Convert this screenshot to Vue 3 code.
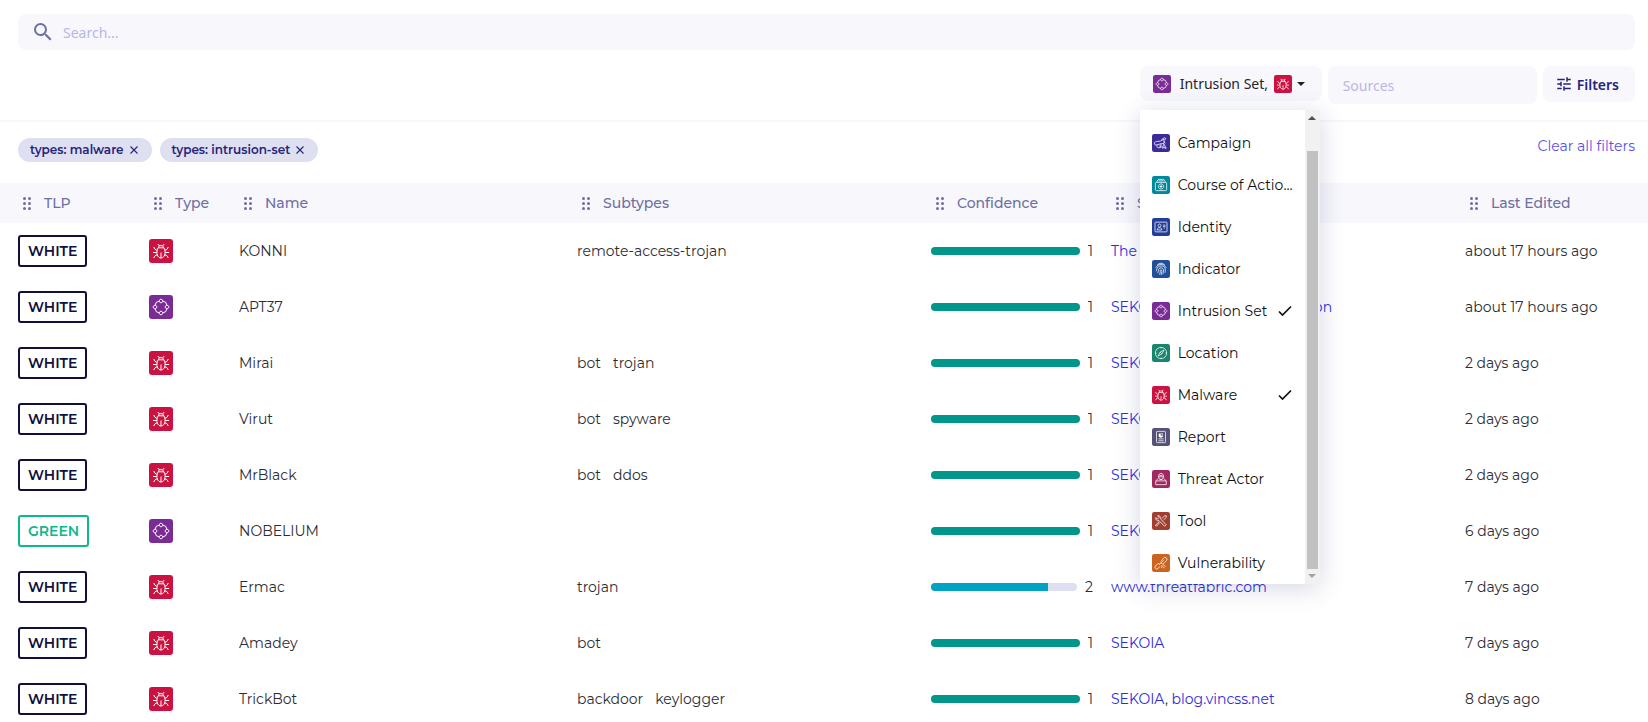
<script setup>
import { ref, computed, h } from 'vue'

const query = ref('')
const source = ref('')

const kinds = {
  campaign: {
    label: 'Campaign',
    color: '#3c2a99',
    path: 'M4.500 10.500a2 2 0 0 0 1.500 4L12 13l4-.500V7l-5 2.500-5 .500ZM12.500 7.500l4-2.500 2 1-1.500 2M16 9.500l1.500 3M7 14.500a2.500 2.500 0 1 0 4.500 1.500h-2M12 13v5h-1M13.500 18.500l2.500-5 3 5.500h-2l-1-2-1 2Z'
  },
  course: {
    label: 'Course of Action',
    color: '#00899b',
    path: 'M6 8.500h12a1.500 1.500 0 0 1 1.500 1.500v8a1.500 1.500 0 0 1-1.500 1.500H6A1.500 1.500 0 0 1 4.500 18v-8A1.500 1.500 0 0 1 6 8.500ZM6.500 8.500V7l2-2.500h7l2 2.500v1.500M8.500 6.500h7M12 10.500a3.500 3.500 0 1 0 .01 0',
    solid: 'M11.300 12.200h1.400v1.100h1.100v1.400h-1.100v1.100h-1.400v-1.100h-1.100v-1.400h1.100Z'
  },
  identity: {
    label: 'Identity',
    color: '#213c99',
    path: 'M5 5.500h14a1 1 0 0 1 1 1v11a1 1 0 0 1-1 1H5a1 1 0 0 1-1-1v-11a1 1 0 0 1 1-1ZM10 8a2 2 0 1 0 .01 0M7 16v-1.500l2-1.500h2l2 1.500V16ZM14.500 9.500h3.500M14.500 11.500h3.500M15.500 13.500H17'
  },
  indicator: {
    label: 'Indicator',
    color: '#1f4f99',
    path: 'M7 6.500a7.500 7.500 0 0 1 10 0M5 10.500a7.500 7.500 0 0 1 14 0M5.500 15c1-1.500.500-7 6.500-7s6 4 5.500 9M7.500 17.500c2-3 0-7 4.500-7s3.500 5 2.500 8.500M10 19.500c2-3 0-6.500 2-6.500s1 4 .200 7'
  },
  intrusion: {
    label: 'Intrusion Set',
    color: '#7a2b96',
    path: 'M12 4.200a1.800 1.800 0 1 0 .01 0M12 16.200a1.800 1.800 0 1 0 .01 0M6 10.200a1.800 1.800 0 1 0 .01 0M18 10.200a1.800 1.800 0 1 0 .01 0M10.200 6.200A4.200 4.200 0 0 0 6.200 10.200M13.800 6.200A4.200 4.200 0 0 1 17.800 10.200M6.200 13.800A4.200 4.200 0 0 0 10.200 17.800M17.800 13.800A4.200 4.200 0 0 1 13.800 17.800'
  },
  location: {
    label: 'Location',
    color: '#1a856d',
    path: 'M12 4.500a7.500 7.500 0 1 0 .01 0M16 8l-2.800 5.200L8 16l2.800-5.200ZM10.800 10.800l2.400 2.400M12 4.500V6M12 18v1.500M4.500 12H6M18 12h1.500'
  },
  malware: {
    label: 'Malware',
    color: '#cb1241',
    path: 'M9 8.800h6c1.200 2.500 1.400 5 .7 7.200-.6 1.700-2 3-3.700 3s-3.100-1.300-3.700-3c-.7-2.200-.5-4.700.7-7.200ZM9.500 8.800l.7-2.100h3.600l.7 2.100M10.200 6.700 8.800 5M13.800 6.700 15.200 5M8.200 11.500 6 10.300 4.700 8M15.800 11.500l2.200-1.200L19.300 8M8 13.500H4M16 13.500h4M8.300 15.700 6 16.700l-1.300 2.300M15.700 15.700l2.300 1 1.300 2.300M12 13.500V19'
  },
  report: {
    label: 'Report',
    color: '#565177',
    path: 'M7 4.500h10a1 1 0 0 1 1 1v13a1 1 0 0 1-1 1H7a1 1 0 0 1-1-1v-13a1 1 0 0 1 1-1ZM8.500 14.500h7M8.500 17h7',
    solid: 'M11.500 6.500v3.500h3.500a3.200 3.200 0 1 1-3.500-3.500ZM12.700 6.500a2.500 2.500 0 0 1 2.300 2.300h-2.300Z'
  },
  actor: {
    label: 'Threat Actor',
    color: '#a02a60',
    path: 'M8.500 9c0-6 7-6 7 0M8 9h8M9 9c0 5 6 5 6 0M10 7.200h4M8.700 11 5 14.500v5h14v-5L15.300 11M5 14.500h14M10 12.500h4'
  },
  tool: {
    label: 'Tool',
    color: '#a23e30',
    path: 'M5 7.500 7.500 9.500l2-2L7.500 5a3.300 3.300 0 0 1 4 4.200l7.300 7.800-2 2-7.500-7.500A3.300 3.300 0 0 1 5 7.500ZM13.500 8.500 16.800 5l2.200 0v2.200l-3.500 3.300M10.500 14l-4.500 5-1.500-1.500 5-4.500'
  },
  vulnerability: {
    label: 'Vulnerability',
    color: '#ca641f',
    path: 'M12 10l3.500-4.500a2.500 2.500 0 0 1 4 3L16 12.500a2.500 2.500 0 0 1-3.500 0M10.500 13.500a2.500 2.500 0 0 0-3.500 0L4.500 16a2.500 2.500 0 0 0 3.500 3.500l2.500-3M9.500 14.500l6-6M13 15v3.500M15 14.500l3 2M14.500 16.500l2 2.500M11.500 11.500l1 1'
  }
}

// Square coloured badge with the entity's line glyph.
const KindIcon = (props) => {
  const kind = kinds[props.kind]
  return h('svg', { viewBox: '0 0 24 24', role: 'img', 'aria-label': kind.label }, [
    h('rect', { width: 24, height: 24, rx: 3, fill: kind.color }),
    h('path', { d: kind.path, fill: 'none', stroke: '#fff', 'stroke-width': 1, 'stroke-linejoin': 'round' }),
    kind.solid ? h('path', { d: kind.solid, fill: '#fff' }) : null
  ])
}
KindIcon.props = ['kind']

const selected = ref(['intrusion', 'malware'])
const toggle = (k) => {
  selected.value = selected.value.includes(k) ? selected.value.filter((s) => s !== k) : [...selected.value, k]
}
const chips = computed(() => [
  { kind: 'malware', text: 'types: malware' },
  { kind: 'intrusion', text: 'types: intrusion-set' }
].filter((c) => selected.value.includes(c.kind)))

const columns = [
  ['tlp', 'TLP'], ['type', 'Type'], ['name', 'Name'], ['subtypes', 'Subtypes'],
  ['confidence', 'Confidence'], ['sources', 'Sources'], ['edited', 'Last Edited']
]

const rows = [
  { tlp: 'WHITE', kind: 'malware', name: 'KONNI', subtypes: ['remote-access-trojan'], level: 1, sources: ['The Hacker News'], edited: 'about 17 hours ago' },
  { tlp: 'WHITE', kind: 'intrusion', name: 'APT37', subtypes: [], level: 1, sources: ['SEKOIA', 'Kaspersky Cooperation'], edited: 'about 17 hours ago' },
  { tlp: 'WHITE', kind: 'malware', name: 'Mirai', subtypes: ['bot', 'trojan'], level: 1, sources: ['SEKOIA'], edited: '2 days ago' },
  { tlp: 'WHITE', kind: 'malware', name: 'Virut', subtypes: ['bot', 'spyware'], level: 1, sources: ['SEKOIA'], edited: '2 days ago' },
  { tlp: 'WHITE', kind: 'malware', name: 'MrBlack', subtypes: ['bot', 'ddos'], level: 1, sources: ['SEKOIA'], edited: '2 days ago' },
  { tlp: 'GREEN', kind: 'intrusion', name: 'NOBELIUM', subtypes: [], level: 1, sources: ['SEKOIA'], edited: '6 days ago' },
  { tlp: 'WHITE', kind: 'malware', name: 'Ermac', subtypes: ['trojan'], level: 2, sources: ['www.threatfabric.com'], edited: '7 days ago' },
  { tlp: 'WHITE', kind: 'malware', name: 'Amadey', subtypes: ['bot'], level: 1, sources: ['SEKOIA'], edited: '7 days ago' },
  { tlp: 'WHITE', kind: 'malware', name: 'TrickBot', subtypes: ['backdoor', 'keylogger'], level: 1, sources: ['SEKOIA', 'blog.vincss.net'], edited: '8 days ago' }
]
</script>

<template>
  <main class="page">
    <header class="top">
      <label class="search">
        <svg class="search-icon" viewBox="0 0 24 24" aria-hidden="true">
          <path fill="#6e6ea3" d="M15.500 14h-.790l-.280-.270A6.471 6.471 0 0 0 16 9.500 6.500 6.500 0 1 0 9.500 16c1.610 0 3.090-.590 4.230-1.570l.270.280v.790l5 4.990L20.490 19l-4.990-5zm-6 0C7.010 14 5 11.990 5 9.500S7.010 5 9.500 5 14 7.010 14 9.500 11.990 14 9.500 14z" />
        </svg>
        <input v-model="query" type="text" placeholder="Search..." aria-label="Search" />
      </label>

      <div class="controls">
        <div class="picker">
          <button class="picker-button" type="button" aria-haspopup="listbox" aria-expanded="true">
            <KindIcon class="icon-small" kind="intrusion" />
            <span class="picker-text">Intrusion Set,</span>
            <KindIcon class="icon-small" kind="malware" />
            <svg class="caret" viewBox="0 0 8 4" aria-hidden="true"><path d="M0 0h8L4 4z" fill="#222" /></svg>
          </button>
          <div class="menu">
            <ul class="options" role="listbox" aria-label="Types" aria-multiselectable="true">
              <li v-for="(kind, key) in kinds" :key="key" class="option" role="option" :aria-selected="selected.includes(key)" @click="toggle(key)">
                <KindIcon class="icon-small" :kind="key" />
                <span class="option-text">{{ kind.label }}</span>
                <svg v-if="selected.includes(key)" class="check" viewBox="0 0 14 12" aria-hidden="true">
                  <path d="M1 6.500 4.500 10 13 1.500" fill="none" stroke="#111" stroke-width="1.700" />
                </svg>
              </li>
            </ul>
            <div class="scrollbar" aria-hidden="true">
              <svg class="arrow" viewBox="0 0 8 4"><path d="M0 4h8L4 0z" fill="#505050" /></svg>
              <span class="thumb"></span>
              <svg class="arrow" viewBox="0 0 8 4"><path d="M0 0h8L4 4z" fill="#a3a3a3" /></svg>
            </div>
          </div>
        </div>
        <input v-model="source" class="sources" type="text" placeholder="Sources" aria-label="Sources" />
        <button class="filters" type="button">
          <svg class="tune" viewBox="0 0 24 24" aria-hidden="true">
            <path fill="#24247a" d="M3 17v2h6v-2H3zM3 5v2h10V5H3zm10 16v-2h8v-2h-8v-2h-2v6h2zM7 9v2H3v2h4v2h2V9H7zm14 4v-2H11v2h10zm-6-4h2V7h4V5h-4V3h-2v6z" />
          </svg>
          <span>Filters</span>
        </button>
      </div>
    </header>

    <div class="active">
      <div class="chips">
        <span v-for="chip in chips" :key="chip.kind" class="chip">
          {{ chip.text }}
          <button class="remove" type="button" :aria-label="'Remove ' + chip.text" @click="toggle(chip.kind)">
            <svg viewBox="0 0 8 8"><path d="M.500.500l7 7M7.500.500l-7 7" stroke="#24247a" stroke-width="1.100" /></svg>
          </button>
        </span>
      </div>
      <a class="clear" href="#" @click.prevent="selected = []">Clear all filters</a>
    </div>

    <table class="grid">
      <thead>
        <tr>
          <th v-for="[key, label] in columns" :key="key" :class="'col-' + key" scope="col">
            <div class="heading">
              <svg class="handle" viewBox="0 0 8 13" aria-hidden="true">
                <g fill="#6e6ea3">
                  <circle cx="1.500" cy="1.500" r="1.500" /><circle cx="6.500" cy="1.500" r="1.500" />
                  <circle cx="1.500" cy="6.500" r="1.500" /><circle cx="6.500" cy="6.500" r="1.500" />
                  <circle cx="1.500" cy="11.500" r="1.500" /><circle cx="6.500" cy="11.500" r="1.500" />
                </g>
              </svg>
              <span>{{ label }}</span>
            </div>
          </th>
        </tr>
      </thead>
      <tbody>
        <tr v-for="row in rows" :key="row.name">
          <td><span class="tlp" :class="{ green: row.tlp === 'GREEN' }">{{ row.tlp }}</span></td>
          <td><KindIcon class="icon-large" :kind="row.kind" /></td>
          <td>{{ row.name }}</td>
          <td><span v-for="s in row.subtypes" :key="s" class="subtype">{{ s }}</span></td>
          <td>
            <div class="meter">
              <div class="track"><div class="fill" :class="'level-' + row.level"></div></div>
              <span>{{ row.level }}</span>
            </div>
          </td>
          <td>
            <template v-for="(s, i) in row.sources" :key="s"><template v-if="i">, </template><a class="source" href="#">{{ s }}</a></template>
          </td>
          <td>{{ row.edited }}</td>
        </tr>
      </tbody>
    </table>
  </main>
</template>

<style>
body {
  background: #fff;
  overflow-x: hidden;
}
</style>

<style scoped>
.page {
  color: #2c2c34;
  font-family: Montserrat, "Open Sans", sans-serif;
  font-size: 14px;
  line-height: 20px;
}

button,
input {
  border: 0;
  font-family: "Noto Sans", sans-serif;
  font-size: 14px;
}

button {
  cursor: pointer;
}

input::placeholder {
  color: #b9b6e6;
  opacity: 1;
}

.top {
  border-bottom: 2px solid #f7f7fc;
  padding: 14px 13px 16px 18px;
}

.search {
  align-items: center;
  background: #f7f7fc;
  border-radius: 8px;
  display: flex;
  gap: 8px;
  height: 36px;
  padding: 0 13px;
}

.search-icon {
  height: 24px;
  width: 24px;
}

.search input {
  background: transparent;
  flex: 1;
  outline: 0;
  padding: 0;
}

.controls {
  align-items: flex-start;
  display: flex;
  gap: 6px;
  justify-content: flex-end;
  margin-top: 16px;
}

.picker {
  position: relative;
}

.picker-button {
  align-items: center;
  background: #f7f7fc;
  border-radius: 8px;
  color: #24242c;
  display: flex;
  height: 35px;
  padding: 0 0 0 13px;
  width: 182px;
}

.picker-text {
  margin: 0 6px 0 9px;
  white-space: nowrap;
}

.caret {
  flex: none;
  height: 4px;
  margin-left: 5px;
  width: 8px;
}

.icon-small {
  flex: none;
  height: 18px;
  width: 18px;
}

.icon-large {
  display: block;
  height: 24px;
  width: 24px;
}

.menu {
  background: #fff;
  box-shadow: 0 4px 24px rgba(50, 60, 120, 0.2);
  display: flex;
  left: 0;
  position: absolute;
  top: 44px;
  width: 180px;
  z-index: 2;
}

.options {
  flex: 1;
  list-style: none;
  margin: 0;
  min-width: 0;
  padding: 12px 0 0;
}

.option {
  align-items: center;
  color: #111;
  cursor: pointer;
  display: flex;
  gap: 8px;
  height: 42px;
  padding: 0 12px;
}

.option-text {
  flex: 1;
  overflow: hidden;
  text-overflow: ellipsis;
  white-space: nowrap;
}

.check {
  flex: none;
  height: 12px;
  margin-right: 1px;
  width: 14px;
}

.scrollbar {
  align-items: center;
  background: #f1f1f1;
  box-sizing: border-box;
  display: flex;
  flex-direction: column;
  padding: 6px 0;
  width: 15px;
}

.arrow {
  height: 4px;
  width: 8px;
}

.thumb {
  background: #c1c1c1;
  flex: 1;
  margin: 31px 0 5px;
  width: 11px;
}

.sources {
  background: #f7f7fc;
  border-radius: 8px;
  box-sizing: border-box;
  height: 38px;
  padding: 0 15px;
  width: 209px;
}

.filters {
  align-items: center;
  background: #f7f7fc;
  border-radius: 8px;
  color: #24247a;
  display: flex;
  font-weight: 600;
  gap: 4px;
  height: 36px;
  padding: 0 16px 0 12px;
}

.tune {
  height: 18px;
  width: 18px;
}

.active {
  align-items: flex-start;
  display: flex;
  justify-content: space-between;
  padding: 14px 13px 19px 18px;
}

.chips {
  display: flex;
  gap: 8px;
  padding: 2px 0;
}

.chip {
  align-items: center;
  background: #dfdff2;
  border-radius: 12px;
  color: #24247a;
  display: flex;
  font-size: 12px;
  font-weight: 600;
  gap: 6px;
  height: 24px;
  padding: 0 14px 0 12px;
}

.remove {
  background: transparent;
  height: 8px;
  padding: 0;
  width: 8px;
}

.remove svg {
  display: block;
  height: 8px;
  width: 8px;
}

.clear {
  color: #5b50e6;
  text-decoration: none;
}

.grid {
  border-collapse: collapse;
  table-layout: fixed;
  width: 100%;
}

th {
  background: #f7f7fc;
  box-sizing: border-box;
  color: #6e6ea3;
  font-weight: 500;
  height: 40px;
  padding: 0 0 0 23px;
}

td {
  height: 56px;
  padding: 0 0 0 18px;
  white-space: nowrap;
}

.heading {
  align-items: center;
  display: flex;
  gap: 13px;
}

.handle {
  height: 13px;
  width: 8px;
}

.col-tlp {
  width: 131px;
}

.col-type {
  width: 90px;
}

.col-subtypes,
.col-sources {
  width: 354px;
}

.col-confidence {
  width: 180px;
}

.col-edited {
  width: 201px;
}

.tlp {
  border: 2px solid #10103a;
  border-radius: 3px;
  color: #10103a;
  display: inline-block;
  font-weight: 600;
  line-height: 28px;
  padding: 0 8px;
}

.tlp.green {
  border-color: #0cb988;
  color: #0cb988;
}

.subtype {
  margin-right: 12px;
}

.meter {
  align-items: center;
  display: flex;
  gap: 8px;
}

.track {
  background: #dfdff2;
  border-radius: 4px;
  flex: 1;
  height: 8px;
  overflow: hidden;
}

.fill {
  height: 100%;
}

.level-1 {
  background: #00968a;
  width: 100%;
}

.level-2 {
  background: #00a3c4;
  width: 80%;
}

.source {
  color: #2c2cdc;
  text-decoration: none;
}
</style>
